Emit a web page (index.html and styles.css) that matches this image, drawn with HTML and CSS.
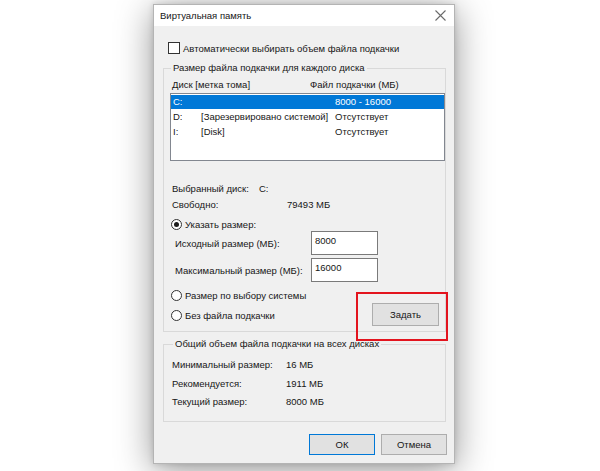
FILE: index.html
```html
<!DOCTYPE html>
<html lang="ru">
<head>
<meta charset="utf-8">
<title>Виртуальная память</title>
<link rel="stylesheet" href="styles.css">
</head>
<body>
<div class="dialog">
  <div class="titlebar">
    <span class="title">Виртуальная память</span>
    <svg class="close" width="11" height="11" viewBox="0 0 11 11"><path d="M0.5 0.5 L10.5 10.5 M10.5 0.5 L0.5 10.5" stroke="#6a6a6a" stroke-width="1.1" fill="none"/></svg>
  </div>
  <div class="body">
    <div class="check-row"><span class="checkbox"></span><span>Автоматически выбирать объем файла подкачки</span></div>

    <fieldset class="group g1">
      <legend>Размер файла подкачки для каждого диска</legend>
      <div class="cols-head"><span class="h1">Диск [метка тома]</span><span>Файл подкачки (МБ)</span></div>
      <div class="listbox">
        <div class="row sel"><span class="c1">C:</span><span class="c2"></span><span class="c3">8000 - 16000</span></div>
        <div class="row"><span class="c1">D:</span><span class="c2">[Зарезервировано системой]</span><span class="c3">Отсутствует</span></div>
        <div class="row"><span class="c1">I:</span><span class="c2">[Disk]</span><span class="c3">Отсутствует</span></div>
      </div>
      <div class="info first"><span class="lbl lbl-disk">Выбранный диск:</span><span>C:</span></div>
      <div class="info"><span class="lbl lbl-free">Свободно:</span><span>79493 МБ</span></div>
      <div class="radio-row r-custom"><span class="radio on"></span><span>Указать размер:</span></div>
      <div class="input-row"><span class="in-lbl">Исходный размер (МБ):</span><span class="input">8000</span></div>
      <div class="input-row second"><span class="in-lbl">Максимальный размер (МБ):</span><span class="input">16000</span></div>
      <div class="lower">
        <div class="radios">
          <div class="radio-row"><span class="radio"></span><span>Размер по выбору системы</span></div>
          <div class="radio-row"><span class="radio"></span><span>Без файла подкачки</span></div>
        </div>
        <div class="set-wrap">
          <span class="btn set">Задать</span>
          <span class="highlight"></span>
        </div>
      </div>
    </fieldset>

    <fieldset class="group g2">
      <legend>Общий объем файла подкачки на всех дисках</legend>
      <div class="total"><span class="lbl2">Минимальный размер:</span><span>16 МБ</span></div>
      <div class="total"><span class="lbl2">Рекомендуется:</span><span>1911 МБ</span></div>
      <div class="total"><span class="lbl2">Текущий размер:</span><span>8000 МБ</span></div>
    </fieldset>

    <div class="buttons">
      <span class="btn ok">ОК</span>
      <span class="btn">Отмена</span>
    </div>
  </div>
</div>
</body>
</html>
```

FILE: styles.css
```css
html, body {
  margin: 0;
  padding: 0;
  background: #ffffff;
}
body {
  width: 600px;
  height: 471px;
  overflow: hidden;
  font-family: "Liberation Sans", Arial, sans-serif;
  font-size: 9.5px;
  color: #161616;
  white-space: nowrap;
}
.dialog {
  box-sizing: border-box;
  margin: 4px 0 0 153px;
  width: 302px;
  height: 460px;
  border: 1px solid #b4b4b4;
  background: #f0f0f0;
  box-shadow: 0 6px 34px rgba(0, 0, 0, 0.42), 0 0 6px rgba(0, 0, 0, 0.14);
  display: flex;
  flex-direction: column;
}
.titlebar {
  height: 21px;
  background: #ffffff;
  display: flex;
  align-items: center;
  justify-content: space-between;
  padding: 0 8px 0 6px;
  flex-shrink: 0;
}
.title {
  font-size: 9.5px;
}
.close {
  display: block;
}
.body {
  flex: 1;
  padding: 0 7px 0 9px;
  display: flex;
  flex-direction: column;
}
.check-row {
  display: flex;
  align-items: center;
  height: 14px;
  margin-top: 15px;
  margin-left: 5px;
}
.checkbox {
  box-sizing: border-box;
  width: 12px;
  height: 12px;
  border: 1px solid #333;
  background: #fff;
  margin-right: 3px;
  flex-shrink: 0;
}
.group {
  margin: 0;
  padding: 0;
  border: 1px solid #d9d9d9;
  min-width: 0;
}
.group legend {
  padding: 0 2px;
  margin-left: 1px;
  line-height: 14px;
  height: 14px;
}
.g1 {
  margin-top: 6px;
  margin-right: 1px;
  padding: 3px 0 5px 6px;
}
.cols-head {
  display: flex;
  line-height: 14px;
  padding-left: 2px;
}
.h1 {
  width: 138px;
  flex-shrink: 0;
}
.listbox {
  box-sizing: border-box;
  margin-top: 1px;
  width: 275px;
  height: 68px;
  background: #fff;
  border: 1px solid #828790;
  padding-top: 1px;
}
.row {
  display: flex;
  height: 14px;
  line-height: 14px;
  padding-left: 2px;
}
.row + .row {
  margin-top: 1px;
}
.row.sel {
  background: #0078d7;
  color: #fff;
}
.c1 { width: 28px; flex-shrink: 0; }
.c2 { width: 134px; flex-shrink: 0; }
.info {
  display: flex;
  line-height: 16px;
  padding-left: 2px;
}
.info.first {
  margin-top: 20px;
}
.lbl { flex-shrink: 0; }
.lbl-disk { width: 87px; }
.lbl-free { width: 115px; }
.radio-row {
  display: flex;
  align-items: center;
  height: 14px;
}
.r-custom {
  margin-top: 4px;
  margin-left: 1px;
}
.radio {
  box-sizing: border-box;
  width: 11px;
  height: 11px;
  border: 1px solid #333;
  border-radius: 50%;
  background: #fff;
  margin-right: 3px;
  position: relative;
  flex-shrink: 0;
}
.radio.on::after {
  content: "";
  position: absolute;
  left: 2px;
  top: 2px;
  width: 5px;
  height: 5px;
  border-radius: 50%;
  background: #1b1b1b;
}
.input-row {
  display: flex;
  align-items: center;
  margin-top: 0;
  padding-left: 5px;
}
.input-row.second {
  margin-top: 3px;
}
.in-lbl {
  width: 136px;
  flex-shrink: 0;
}
.input {
  box-sizing: border-box;
  width: 67px;
  height: 24px;
  background: #fff;
  border: 1px solid #7a7a7a;
  padding: 2px 0 0 3px;
  line-height: 14px;
}
.lower {
  display: flex;
  justify-content: space-between;
  align-items: flex-start;
  padding-right: 6px;
}
.radios {
  display: flex;
  flex-direction: column;
  gap: 6px;
  margin-top: 6px;
  margin-left: 1px;
}
.set-wrap {
  position: relative;
  margin-top: 21px;
}
.btn {
  box-sizing: border-box;
  display: flex;
  align-items: center;
  justify-content: center;
  width: 67px;
  height: 23px;
  background: #e1e1e1;
  border: 1px solid #adadad;
  color: #161616;
}
.highlight {
  position: absolute;
  left: -16px;
  top: -11px;
  width: 92px;
  height: 49px;
  box-sizing: border-box;
  border: 2px solid #e3141e;
}
.g2 {
  margin-top: 5px;
  margin-right: 1px;
  padding: 5px 0 9px 8px;
}
.total {
  display: flex;
  line-height: 18.5px;
}
.lbl2 {
  width: 114px;
  flex-shrink: 0;
}
.buttons {
  display: flex;
  justify-content: flex-end;
  gap: 6px;
  margin-top: 12px;
}
.buttons .btn {
  width: 66px;
  height: 21px;
}
.btn.ok {
  border-color: #0078d7;
}
```
